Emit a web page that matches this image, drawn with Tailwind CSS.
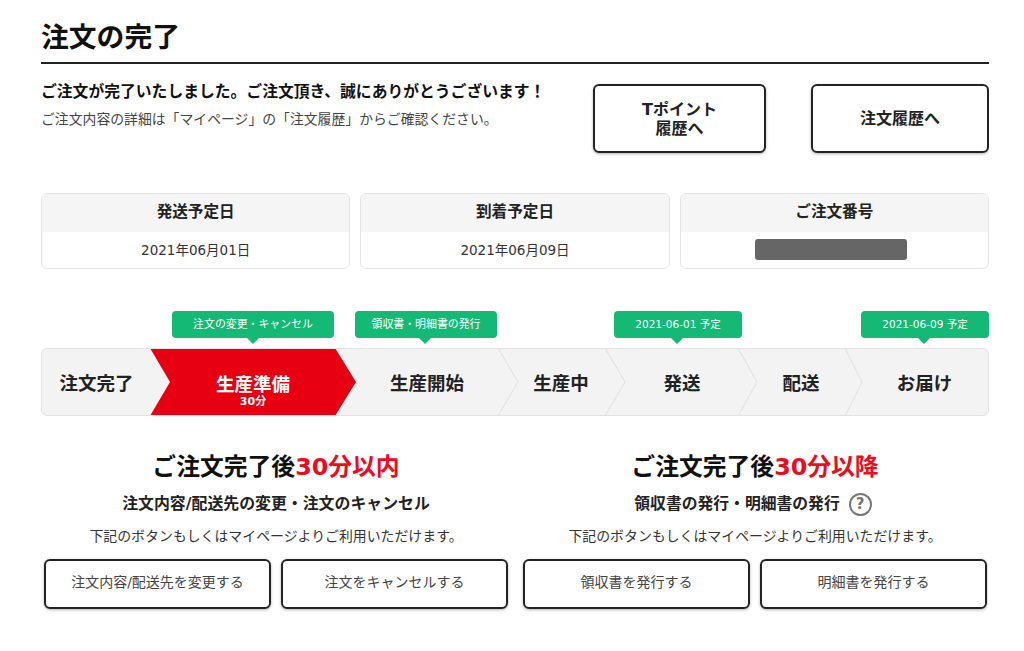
<!DOCTYPE html>
<html lang="ja">
<head>
    <meta charset="UTF-8">
    <title>注文の完了</title>
    <script src="https://cdn.jsdelivr.net/npm/@tailwindcss/browser@4"></script>
</head>
<body class="bg-white text-[#222] font-['DejaVu_Sans','Noto_Sans_CJK_JP',sans-serif]">
    <main class="w-[948px] ml-[41px] h-[651px] overflow-hidden">
        <!-- Title -->
        <h1 class="h-[64px] pt-[19px] border-b-2 border-[#222] text-[27.8px] leading-[38px] font-bold text-[#111]">注文の完了</h1>

        <!-- Message + links -->
        <div class="flex mt-[20px] h-[69px]">
            <div class="w-[552px]">
                <p class="text-[15.8px] leading-[16px] font-bold text-[#111]">ご注文が完了いたしました。ご注文頂き、誠にありがとうございます！</p>
                <p class="text-[13.85px] leading-[16px] text-[#444] mt-[11px]">ご注文内容の詳細は「マイページ」の「注文履歴」からご確認ください。</p>
            </div>
            <a class="w-[173px] h-[69px] flex items-center justify-center text-center text-[16px] leading-[19px] font-bold border-2 border-[#222] rounded-md shadow-[0_1px_3px_rgba(0,0,0,0.3)]">Tポイント<br>履歴へ</a>
            <a class="w-[178px] h-[69px] ml-[45px] flex items-center justify-center text-[16px] font-bold border-2 border-[#222] rounded-md shadow-[0_1px_3px_rgba(0,0,0,0.3)]">注文履歴へ</a>
        </div>

        <!-- Dates -->
        <div class="grid grid-cols-3 gap-[10px] mt-[40px] h-[76px]">
            <div class="border border-[#e4e4e4] rounded-md overflow-hidden">
                <div class="h-[38px] pb-[1px] bg-[#f5f5f5] flex items-center justify-center text-[15.6px] font-bold">発送予定日</div>
                <div class="h-[36px] flex items-center justify-center text-[13.5px] text-[#333]">2021年06月01日</div>
            </div>
            <div class="border border-[#e4e4e4] rounded-md overflow-hidden">
                <div class="h-[38px] pb-[1px] bg-[#f5f5f5] flex items-center justify-center text-[15.6px] font-bold">到着予定日</div>
                <div class="h-[36px] flex items-center justify-center text-[13.5px] text-[#333]">2021年06月09日</div>
            </div>
            <div class="border border-[#e4e4e4] rounded-md overflow-hidden">
                <div class="h-[38px] pb-[1px] bg-[#f5f5f5] flex items-center justify-center text-[15.6px] font-bold">ご注文番号</div>
                <div class="h-[36px] pb-[2px] pr-[6px] flex items-center justify-center"><div class="w-[152px] h-[21px] bg-[#666] rounded-[3px]"></div></div>
            </div>
        </div>

        <!-- Step tags -->
        <div class="flex mt-[42px] h-[27px] text-white">
            <div class="relative ml-[131px] w-[162px] pt-[1px] bg-[#14b975] rounded-[4px] flex items-center justify-center text-[10.9px]">注文の変更・キャンセル
                <span class="absolute left-[75px] top-[27px] border-x-[6px] border-x-transparent border-t-[6px] border-t-[#14b975]"></span>
            </div>
            <div class="relative ml-[21px] w-[142px] pt-[1px] bg-[#14b975] rounded-[4px] flex items-center justify-center text-[10.9px]">領収書・明細書の発行
                <span class="absolute left-[64px] top-[27px] border-x-[6px] border-x-transparent border-t-[6px] border-t-[#14b975]"></span>
            </div>
            <div class="relative ml-[117px] w-[128px] bg-[#14b975] rounded-[4px] flex items-center justify-center text-[10.5px]">2021-06-01 予定
                <span class="absolute left-[57px] top-[27px] border-x-[6px] border-x-transparent border-t-[6px] border-t-[#14b975]"></span>
            </div>
            <div class="relative ml-[119px] w-[128px] bg-[#14b975] rounded-[4px] flex items-center justify-center text-[10.5px]">2021-06-09 予定
                <span class="absolute left-[57px] top-[27px] border-x-[6px] border-x-transparent border-t-[6px] border-t-[#14b975]"></span>
            </div>
        </div>

        <!-- Steps -->
        <div class="relative flex mt-[10px] h-[68px] w-[948px] bg-[#f3f3f3] border border-[#e2e2e2] rounded-md overflow-hidden text-[18.5px] font-bold">
            <svg class="absolute left-[-1px] top-[-1px]" width="948" height="68" viewBox="0 0 948 68" fill="none">
                <path d="M109 0H294L315 34L294 68H109L129 34Z" fill="#e60012"/>
                <g stroke="#e0e0e0" stroke-width="1">
                    <path d="M457 0L477 34L457 68"/>
                    <path d="M564 0L584 34L564 68"/>
                    <path d="M697 0L716 34L697 68"/>
                    <path d="M804 0L821 34L804 68"/>
                </g>
            </svg>
            <div class="relative w-[109px] pt-[3px] flex items-center justify-center">注文完了</div>
            <div class="relative w-[204px] flex flex-col items-center justify-center text-white leading-[20px] pt-[18px]">生産準備<span class="text-[11px] leading-[12px] mt-[1px]">30分</span></div>
            <div class="relative w-[144px] pt-[3px] flex items-center justify-center">生産開始</div>
            <div class="relative w-[124px] pt-[3px] flex items-center justify-center">生産中</div>
            <div class="relative w-[118px] pt-[3px] flex items-center justify-center">発送</div>
            <div class="relative w-[120px] pt-[3px] flex items-center justify-center">配送</div>
            <div class="relative w-[127px] pt-[3px] flex items-center justify-center">お届け</div>
        </div>

        <!-- Actions -->
        <div class="flex mt-[34px] ml-[3px] gap-[15px]">
            <section class="w-[464px] text-center">
                <h2 class="text-[23.8px] leading-[34px] font-bold text-[#111]">ご注文完了後<span class="text-[#f00a1e]">30分以内</span></h2>
                <h3 class="text-[15.9px] leading-[24px] font-bold mt-[8px]">注文内容/配送先の変更・注文のキャンセル</h3>
                <p class="text-[13.9px] leading-[20px] text-[#333] mt-[10px]">下記のボタンもしくはマイページよりご利用いただけます。</p>
                <div class="flex gap-[10px] mt-[13px]">
                    <a class="w-[227px] h-[50px] pb-[3px] flex items-center justify-center text-[14px] text-[#444] border-2 border-[#222] rounded-md shadow-[0_1px_3px_rgba(0,0,0,0.3)]">注文内容/配送先を変更する</a>
                    <a class="w-[227px] h-[50px] pb-[3px] flex items-center justify-center text-[14px] text-[#444] border-2 border-[#222] rounded-md shadow-[0_1px_3px_rgba(0,0,0,0.3)]">注文をキャンセルする</a>
                </div>
            </section>
            <section class="w-[464px] text-center">
                <h2 class="text-[23.8px] leading-[34px] font-bold text-[#111]">ご注文完了後<span class="text-[#f00a1e]">30分以降</span></h2>
                <h3 class="flex items-center justify-center gap-[9px] text-[15.8px] leading-[24px] font-bold mt-[8px] pr-[4px]">領収書の発行・明細書の発行
                    <span class="w-[23px] h-[23px] rounded-full border-2 border-[#777] text-[#777] text-[15px] leading-[19px]">?</span>
                </h3>
                <p class="text-[13.9px] leading-[20px] text-[#333] mt-[10px]">下記のボタンもしくはマイページよりご利用いただけます。</p>
                <div class="flex gap-[10px] mt-[13px]">
                    <a class="w-[227px] h-[50px] pb-[3px] flex items-center justify-center text-[14px] text-[#444] border-2 border-[#222] rounded-md shadow-[0_1px_3px_rgba(0,0,0,0.3)]">領収書を発行する</a>
                    <a class="w-[227px] h-[50px] pb-[3px] flex items-center justify-center text-[14px] text-[#444] border-2 border-[#222] rounded-md shadow-[0_1px_3px_rgba(0,0,0,0.3)]">明細書を発行する</a>
                </div>
            </section>
        </div>
    </main>
</body>
</html>
